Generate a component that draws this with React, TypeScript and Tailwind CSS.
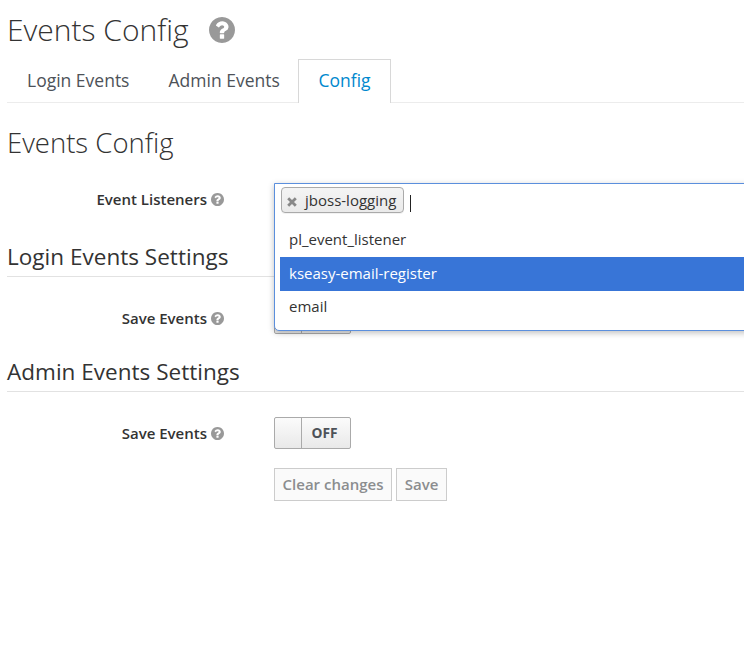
import React from "react";

function HelpIcon({ className }: { className: string }) {
  return (
    <svg viewBox="128 128 1536 1536" className={className} fill="currentColor" aria-hidden="true">
      <path d="M1024 1376v-192q0-14-9-23t-23-9h-192q-14 0-23 9t-9 23v192q0 14 9 23t23 9h192q14 0 23-9t9-23zm256-672q0-88-55.5-163t-138.5-116-170-41q-243 0-371 213-15 24 8 42l132 100q7 6 19 6 16 0 25-12 53-68 86-92 34-24 86-24 48 0 85.5 26t37.5 59q0 38-20 61t-68 45q-63 28-115.5 86.5t-52.5 125.5v36q0 14 9 23t23 9h192q14 0 23-9t9-23q0-19 21.5-49.5t54.5-49.5q32-18 49-28.5t46-35 44.5-48 28-60.5 12.5-81zm384 192q0 209-103 385.5t-279.5 279.5-385.5 103-385.5-103-279.5-279.5-103-385.5 103-385.5 279.5-279.5 385.5-103 385.5 103 279.5 279.5 103 385.5z" />
    </svg>
  );
}

function FieldLabel({ children }: { children: React.ReactNode }) {
  return (
    <div className="flex h-8 w-[217px] shrink-0 items-center justify-end gap-1 text-[15px] font-semibold text-[#333]">
      <span className="whitespace-nowrap">{children}</span>
      <HelpIcon className="size-[13px] text-[#999]" />
    </div>
  );
}

function OffSwitch({ label }: { label?: string }) {
  return (
    <div className="flex h-8 w-[77px] rounded-[2px] border border-[#aaa] bg-linear-to-b from-[#fbfbfb] to-[#e9e9e9]">
      <span className="w-[27px] border-r border-[#aaa]" />
      <span className="flex flex-1 items-center justify-center pr-[3px] text-[13.75px] font-bold text-[#4d5258]">{label}</span>
    </div>
  );
}

function SectionTitle({ children }: { children: React.ReactNode }) {
  return (
    <h3 className="h-10 border-b border-[#e2e2e2] text-[22.5px] leading-[39px] tracking-[0.02px] text-[#333]">{children}</h3>
  );
}

function ListenerSelect() {
  return (
    <div className="relative h-9 w-[500px] shrink-0">
      <div className="absolute inset-x-0 top-0 z-10 h-[148px] rounded-b-[5px] border border-[#5b8fdd] bg-white pl-[5px] shadow-[0_2px_6px_rgba(0,0,0,0.25)]">
        <div className="flex h-[39px] items-start pt-[3px] pl-px">
          <div className="flex h-[26px] w-[123px] items-center rounded-[4px] border border-[#aaa] bg-linear-to-b from-[#f4f4f4] to-[#eaeaea] pl-[5px] text-[15px] text-[#333] shadow-[0_1px_0_rgba(0,0,0,0.05)]">
            <svg viewBox="0 0 10 10" className="mt-[3px] mr-[8px] size-[10px] shrink-0" aria-hidden="true">
              <path d="M1.2 1.2 8.8 8.8M8.8 1.2 1.2 8.8" stroke="#888" strokeWidth="2.8" />
            </svg>
            jboss-logging
          </div>
          <span className="mt-[8px] ml-[6px] h-[17px] w-px bg-[#222]" />
        </div>
        <ul className="text-[15px] text-[#333]">
          <li className="h-[34px] pl-[9px] leading-[32px]">pl_event_listener</li>
          <li className="h-[34px] bg-[#3875d7] pl-[9px] leading-[33px] text-white">kseasy-email-register</li>
          <li className="h-[34px] pl-[9px] leading-[30px]">email</li>
        </ul>
      </div>
    </div>
  );
}

export default function App() {
  return (
    <main className="h-[661px] overflow-hidden bg-white pl-[7px] font-['Open_Sans','Noto_Sans',sans-serif]">
      <div className="flex h-[59px] items-center gap-[20px] text-[#333]">
        <h1 className="text-[30px] font-light">Events Config</h1>
        <HelpIcon className="size-[26px] text-[#999]" />
      </div>
      <nav className="flex h-11 border-b border-[#ececec] text-[17.5px] leading-[42px] text-[#4d5258]">
        <a className="w-[141px] pl-5">Login Events</a>
        <a className="w-[150px] pl-[20.5px]">Admin Events</a>
        <a className="-mb-px w-[93px] border border-b-0 border-[#d8d8d8] bg-white text-center leading-[40px] text-[#0088ce]">Config</a>
      </nav>
      <h2 className="mt-5 h-10 text-[27.5px] leading-10 font-light text-[#333]">Events Config</h2>
      <div className="mt-5 flex h-[54px] gap-[50px]">
        <FieldLabel>Event Listeners</FieldLabel>
        <ListenerSelect />
      </div>
      <SectionTitle>Login Events Settings</SectionTitle>
      <div className="mt-[25px] flex h-[50px] gap-[50px]">
        <FieldLabel>Save Events</FieldLabel>
        <OffSwitch />
      </div>
      <SectionTitle>Admin Events Settings</SectionTitle>
      <div className="mt-[25px] flex h-[51px] gap-[50px]">
        <FieldLabel>Save Events</FieldLabel>
        <OffSwitch label="OFF" />
      </div>
      <div className="flex gap-1 pl-[267px] text-[15px] font-semibold text-[#8b8d8f]">
        <button className="h-[33px] w-[118px] border border-[#ccc] bg-[#fafafa] whitespace-nowrap">Clear changes</button>
        <button className="h-[33px] w-[51px] border border-[#ccc] bg-[#fafafa]">Save</button>
      </div>
    </main>
  );
}
